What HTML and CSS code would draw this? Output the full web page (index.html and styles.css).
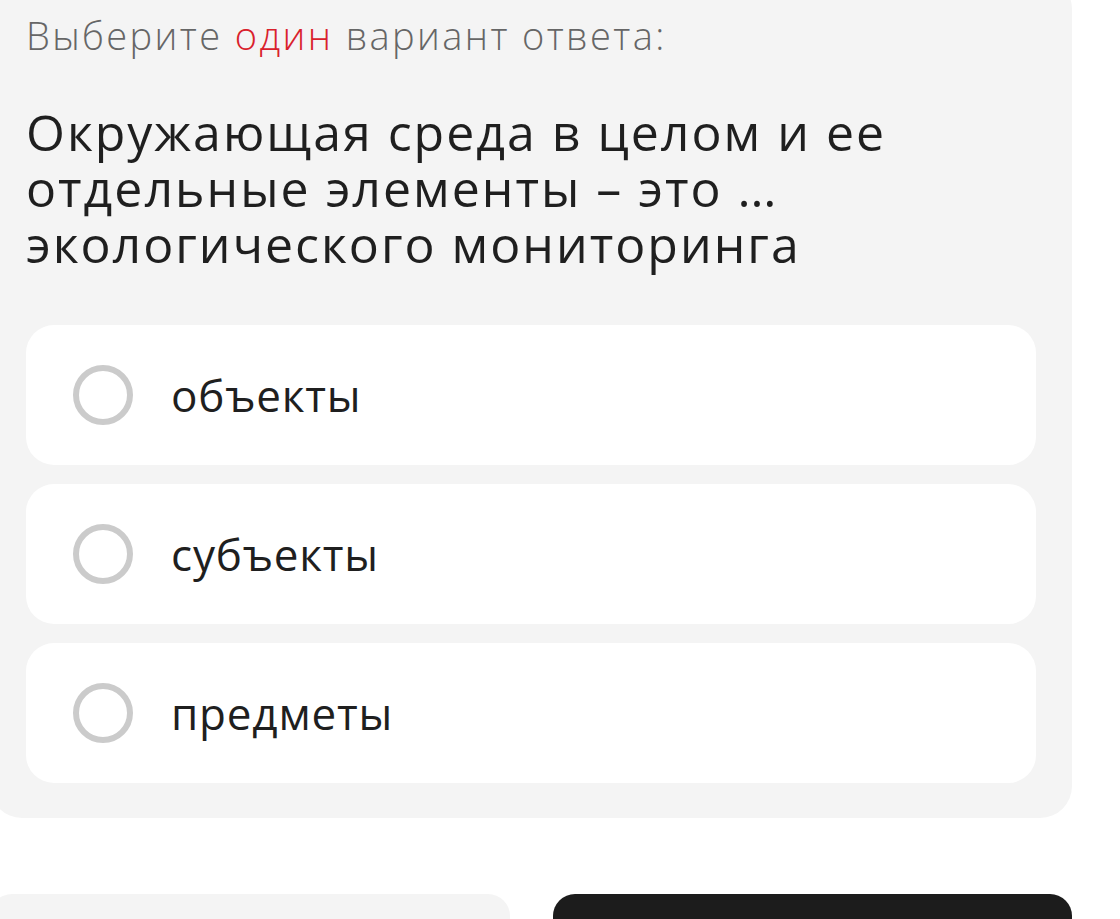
FILE: index.html
```html
<!DOCTYPE html>
<html lang="ru">
<head>
    <meta charset="UTF-8">
    <meta name="viewport" content="width=device-width, initial-scale=1.0">
    <title>Тест</title>
    <link rel="stylesheet" href="styles.css">
</head>
<body>

<div id="page">
    <div id="quiz-card">
        <p class="hint">Выберите <span class="hint-accent">один</span> вариант ответа:</p>
        <h2 class="question">Окружающая среда в целом и ее отдельные элементы – это … экологического мониторинга</h2>

        <div class="options">
            <label class="option">
                <input type="radio" name="answer" value="1">
                <span class="radio"></span>
                <span class="option-text">объекты</span>
            </label>
            <label class="option">
                <input type="radio" name="answer" value="2">
                <span class="radio"></span>
                <span class="option-text">субъекты</span>
            </label>
            <label class="option">
                <input type="radio" name="answer" value="3">
                <span class="radio"></span>
                <span class="option-text">предметы</span>
            </label>
        </div>
    </div>

    <div class="actions">
        <button class="btn btn-skip" aria-label="Пропустить"></button>
        <button class="btn btn-submit" aria-label="Ответить"></button>
    </div>
</div>

</body>
</html>
```

FILE: styles.css
```css
body {
    margin: 0;
    background-color: #fff;
    font-family: "Open Sans", Arial, sans-serif;
    color: #1f1f1f;
}
#page {
    width: 1082px;
    margin: -23px 0 0 -10px;
}
#quiz-card {
    background-color: #f4f4f4;
    border-radius: 32px;
    padding: 36px 36px 35px;
}
.hint {
    margin: 0;
    font-size: 38px;
    line-height: 44px;
    font-weight: 300;
    letter-spacing: 2.4px;
    color: #666;
}
.hint-accent {
    color: #d9212c;
}
.question {
    margin: 47px 0 0;
    font-size: 50px;
    line-height: 56px;
    font-weight: 400;
    letter-spacing: 2px;
    color: #1f1f1f;
}
.options {
    display: flex;
    flex-direction: column;
    gap: 19px;
    margin-top: 53px;
}
.option {
    display: flex;
    align-items: center;
    height: 140px;
    padding: 0 47px;
    background-color: #fff;
    border-radius: 28px;
    cursor: pointer;
}
.option input {
    display: none;
}
.radio {
    width: 48px;
    height: 48px;
    border: 6px solid #cbcbcb;
    border-radius: 50%;
    margin-right: 38px;
    flex-shrink: 0;
}
.option input:checked + .radio {
    border-color: #d9212c;
}
.option-text {
    font-size: 44px;
    letter-spacing: 0.8px;
    color: #1f1f1f;
}
.actions {
    display: flex;
    gap: 43px;
    margin-top: 76px;
}
.btn {
    flex: 1;
    height: 100px;
    border: none;
    border-radius: 22px;
    cursor: pointer;
}
.btn-skip {
    background-color: #f4f4f4;
}
.btn-submit {
    background-color: #1c1c1c;
}
```
